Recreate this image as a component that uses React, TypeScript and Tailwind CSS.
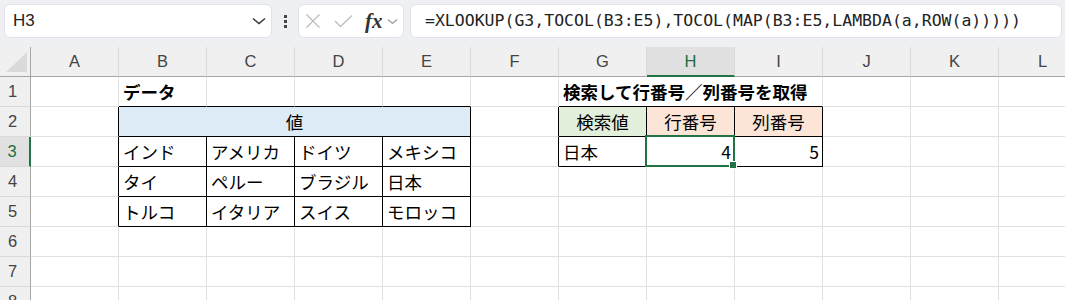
import type React from "react";

const COLS = ["A", "B", "C", "D", "E", "F", "G", "H", "I", "J", "K", "L"];

type CellProps = {
  children?: React.ReactNode;
  span?: 1 | 3 | 4;
  r?: boolean;
  b?: boolean;
  bg?: string;
  align?: "left" | "center" | "right";
  bold?: boolean;
  selected?: boolean;
};

function Cell({ children, span = 1, r, b, bg = "", align = "left", bold, selected }: CellProps) {
  const spanCls = span === 4 ? "col-span-4" : span === 3 ? "col-span-3" : "";
  const alignCls =
    align === "center" ? "justify-center" : align === "right" ? "justify-end pr-[3px]" : "justify-start pl-[4px]";
  return (
    <div
      className={`relative flex items-center whitespace-nowrap border-r border-b text-[17.5px] leading-none text-black ${spanCls} ${alignCls} ${bg} ${
        r ? "border-r-black" : "border-r-[#e1e1e1]"
      } ${b ? "border-b-black" : "border-b-[#e1e1e1]"} ${bold ? "font-bold" : ""}`}
    >
      {children}
      {selected && (
        <div className="absolute -left-[2px] -top-[2px] z-10 h-[32px] w-[90px] border-2 border-[#217346]">
          <div className="absolute -right-[3px] -bottom-[3px] h-[6px] w-[6px] bg-[#217346] outline outline-1 outline-white" />
        </div>
      )}
    </div>
  );
}

function RowHead({ n, active }: { n: number; active?: boolean }) {
  return (
    <div
      className={`flex items-center justify-center pr-[5px] border-b border-b-[#d9d9d9] text-[16.5px] leading-none ${
        active
          ? "bg-[#e1e1e1] border-r-2 border-r-[#217346] text-[#1d6b3f]"
          : "bg-[#f0f0f0] border-r border-r-[#a6a6a6] text-[#444]"
      }`}
      style={{ fontFamily: '"Liberation Sans", Arial, sans-serif' }}
    >
      {n}
    </div>
  );
}

function Empty({ n }: { n: number }) {
  return (
    <>
      {Array.from({ length: n }).map((_, i) => (
        <Cell key={i} />
      ))}
    </>
  );
}

export default function App() {
  return (
    <div
      className="w-[1065px] h-[300px] overflow-hidden bg-white"
      style={{ fontFamily: '"Noto Sans CJK JP", "Noto Sans", sans-serif' }}
    >
      {/* 数式バー */}
      <div className="h-[47px] bg-[#eef0f3] flex items-start pt-[4px] pl-[4px]">
        <div className="w-[268px] h-[34px] bg-white rounded-md border border-[#e1e3e6] flex items-center justify-between pl-[8px] pr-[4px]">
          <span className="text-[17px] text-[#222]" style={{ fontFamily: '"Liberation Sans", Arial, sans-serif' }}>
            H3
          </span>
          <svg width="14" height="8" viewBox="0 0 14 8" className="mr-[1px]">
            <path d="M1 1.5 L7 6.5 L13 1.5" fill="none" stroke="#333" strokeWidth="1.4" />
          </svg>
        </div>
        <div className="w-[26px] h-[34px] flex flex-col items-center justify-center gap-[2px]">
          <span className="w-[3px] h-[3px] bg-[#444]" />
          <span className="w-[3px] h-[3px] bg-[#444]" />
          <span className="w-[3px] h-[3px] bg-[#444]" />
        </div>
        <div className="w-[106px] h-[34px] bg-white rounded-md border border-[#e1e3e6] flex items-center pl-[6px]">
          <svg width="16" height="16" viewBox="0 0 16 16">
            <path d="M1.5 1.5 L14.5 14.5 M14.5 1.5 L1.5 14.5" stroke="#bdbdbd" strokeWidth="1.3" />
          </svg>
          <svg width="19" height="14" viewBox="0 0 19 14" className="ml-[13px]">
            <path d="M1 7 L6.5 12.5 L18 1.5" fill="none" stroke="#bdbdbd" strokeWidth="1.3" />
          </svg>
          <span
            className="ml-[12px] text-[21px] italic font-bold leading-none text-[#333]"
            style={{ fontFamily: '"Liberation Serif", "Times New Roman", serif' }}
          >
            fx
          </span>
          <svg width="11" height="7" viewBox="0 0 11 7" className="ml-[4px]">
            <path d="M1 1.5 L5.5 5.5 L10 1.5" fill="none" stroke="#999" strokeWidth="1.2" />
          </svg>
        </div>
        <div className="ml-[6px] w-[652px] h-[34px] bg-white rounded-md border border-[#e1e3e6] flex items-center pl-[14px]">
          <span
            className="text-[16.5px] text-[#222] whitespace-nowrap"
            style={{ fontFamily: '"DejaVu Sans Mono", "Liberation Mono", monospace' }}
          >
            =XLOOKUP(G3,TOCOL(B3:E5),TOCOL(MAP(B3:E5,LAMBDA(a,ROW(a)))))
          </span>
        </div>
      </div>

      {/* シート */}
      <div className="grid grid-cols-[31px_repeat(12,88px)] auto-rows-[30px]">
        {/* 列見出し */}
        <div className="relative bg-[#f0f0f0] border-r border-b border-r-[#a6a6a6] border-b-[#a6a6a6]">
          <svg width="24" height="22" viewBox="0 0 24 22" className="absolute left-[5px] top-[4px]">
            <polygon points="22,1 22,21 1,21" fill="#dadada" />
          </svg>
        </div>
        {COLS.map((c) => (
          <div
            key={c}
            className={`flex items-center justify-center text-[16.5px] leading-none border-r border-r-[#dadada] ${
              c === "H"
                ? "bg-[#e1e1e1] border-b-2 border-b-[#217346] text-[#1d6b3f]"
                : "bg-[#f0f0f0] border-b border-b-[#a6a6a6] text-[#444]"
            }`}
            style={{ fontFamily: '"Liberation Sans", Arial, sans-serif' }}
          >
            {c}
          </div>
        ))}

        {/* 1行目 */}
        <RowHead n={1} />
        <Cell />
        <Cell b bold>
          データ
        </Cell>
        <Cell b />
        <Cell b />
        <Cell b />
        <Cell />
        <Cell span={3} b bold>
          検索して行番号／列番号を取得
        </Cell>
        <Empty n={3} />

        {/* 2行目 */}
        <RowHead n={2} />
        <Cell r />
        <Cell span={4} r b bg="bg-[#ddebf7]" align="center">
          値
        </Cell>
        <Cell r />
        <Cell r b bg="bg-[#e2efda]" align="center">
          検索値
        </Cell>
        <Cell r b bg="bg-[#fce4d6]" align="center">
          行番号
        </Cell>
        <Cell r b bg="bg-[#fce4d6]" align="center">
          列番号
        </Cell>
        <Empty n={3} />

        {/* 3行目 */}
        <RowHead n={3} active />
        <Cell r />
        <Cell r b>インド</Cell>
        <Cell r b>アメリカ</Cell>
        <Cell r b>ドイツ</Cell>
        <Cell r b>メキシコ</Cell>
        <Cell r />
        <Cell r b>日本</Cell>
        <Cell r b align="right" selected>
          4
        </Cell>
        <Cell r b align="right">
          5
        </Cell>
        <Empty n={3} />

        {/* 4行目 */}
        <RowHead n={4} />
        <Cell r />
        <Cell r b>タイ</Cell>
        <Cell r b>ペルー</Cell>
        <Cell r b>ブラジル</Cell>
        <Cell r b>日本</Cell>
        <Empty n={7} />

        {/* 5行目 */}
        <RowHead n={5} />
        <Cell r />
        <Cell r b>トルコ</Cell>
        <Cell r b>イタリア</Cell>
        <Cell r b>スイス</Cell>
        <Cell r b>モロッコ</Cell>
        <Empty n={7} />

        {[6, 7, 8].map((n) => (
          <div key={n} className="contents">
            <RowHead n={n} />
            <Empty n={12} />
          </div>
        ))}
      </div>
    </div>
  );
}
